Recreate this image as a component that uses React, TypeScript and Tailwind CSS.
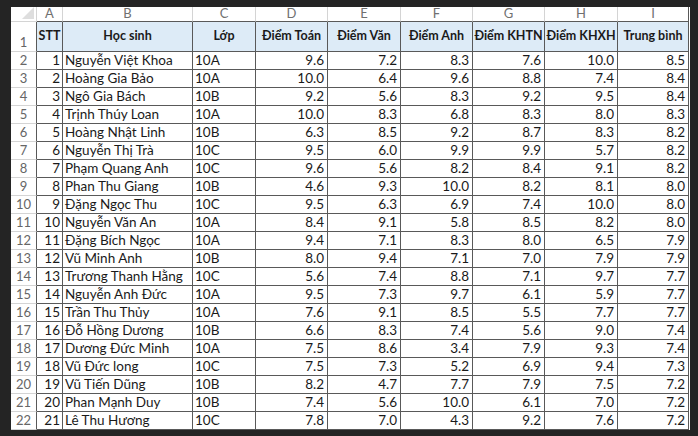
const columns = ["A", "B", "C", "D", "E", "F", "G", "H", "I"];

const headers = [
  "STT",
  "Học sinh",
  "Lớp",
  "Điểm Toán",
  "Điểm Văn",
  "Điểm Anh",
  "Điểm KHTN",
  "Điểm KHXH",
  "Trung bình",
];

type Student = [string, string, number, number, number, number, number, number];

const students: Student[] = [
  ["Nguyễn Việt Khoa", "10A", 9.6, 7.2, 8.3, 7.6, 10.0, 8.5],
  ["Hoàng Gia Bảo", "10A", 10.0, 6.4, 9.6, 8.8, 7.4, 8.4],
  ["Ngô Gia Bách", "10B", 9.2, 5.6, 8.3, 9.2, 9.5, 8.4],
  ["Trịnh Thúy Loan", "10A", 10.0, 8.3, 6.8, 8.3, 8.0, 8.3],
  ["Hoàng Nhật Linh", "10B", 6.3, 8.5, 9.2, 8.7, 8.3, 8.2],
  ["Nguyễn Thị Trà", "10C", 9.5, 6.0, 9.9, 9.9, 5.7, 8.2],
  ["Phạm Quang Anh", "10C", 9.6, 5.6, 8.2, 8.4, 9.1, 8.2],
  ["Phan Thu Giang", "10B", 4.6, 9.3, 10.0, 8.2, 8.1, 8.0],
  ["Đặng Ngọc Thu", "10C", 9.5, 6.3, 6.9, 7.4, 10.0, 8.0],
  ["Nguyễn Văn An", "10A", 8.4, 9.1, 5.8, 8.5, 8.2, 8.0],
  ["Đặng Bích Ngọc", "10A", 9.4, 7.1, 8.3, 8.0, 6.5, 7.9],
  ["Vũ Minh Anh", "10B", 8.0, 9.4, 7.1, 7.0, 7.9, 7.9],
  ["Trương Thanh Hằng", "10C", 5.6, 7.4, 8.8, 7.1, 9.7, 7.7],
  ["Nguyễn Anh Đức", "10A", 9.5, 7.3, 9.7, 6.1, 5.9, 7.7],
  ["Trần Thu Thủy", "10A", 7.6, 9.1, 8.5, 5.5, 7.7, 7.7],
  ["Đỗ Hồng Dương", "10B", 6.6, 8.3, 7.4, 5.6, 9.0, 7.4],
  ["Dương Đức Minh", "10A", 7.5, 8.6, 3.4, 7.9, 9.3, 7.4],
  ["Vũ Đức long", "10C", 7.5, 7.3, 5.2, 6.9, 9.4, 7.3],
  ["Vũ Tiến Dũng", "10B", 8.2, 4.7, 7.7, 7.9, 7.5, 7.2],
  ["Phan Mạnh Duy", "10B", 7.4, 5.6, 10.0, 6.1, 7.0, 7.2],
  ["Lê Thu Hương", "10C", 7.8, 7.0, 4.3, 9.2, 7.6, 7.2],
];

const grid =
  "grid grid-cols-[26px_26px_130px_63px_72px_73px_72px_72px_73px_71px]";

export default function App() {
  return (
    <div
      className="w-[698px] h-[436px] bg-[#242424] pl-[11px] pt-[7px] overflow-hidden"
      style={{ fontFamily: "Lato, 'Open Sans', sans-serif" }}
    >
      <div className="w-[679px] h-[423px] bg-white text-[13.5px] text-[#1a1a1a] leading-none">
        {/* Column letters */}
        <div className={`${grid} h-[15px]`}>
          <div className="relative border-r border-b border-[#d4d4d4]">
            <svg
              className="absolute right-[2px] bottom-[2px]"
              width="12"
              height="12"
              viewBox="0 0 12 12"
            >
              <polygon points="12,0 12,12 0,12" fill="#dedede" />
            </svg>
          </div>
          {columns.map((c, i) => (
            <div
              key={c}
              className={`flex items-end justify-center pb-[1px] text-[13px] text-[#707070] border-b border-[#595959] ${
                i === columns.length - 1 ? "border-r border-r-[#595959]" : "border-r border-r-[#d4d4d4]"
              }`}
            >
              {c}
            </div>
          ))}
        </div>

        {/* Header row */}
        <div className={`${grid} h-[30px]`}>
          <div className="flex items-end justify-center pb-[2px] text-[13px] text-[#666] border-r border-r-[#595959] border-b border-b-[#d4d4d4]">
            1
          </div>
          {headers.map((h) => (
            <div
              key={h}
              className="flex items-center justify-center text-[12.5px] font-bold bg-[#ddebf7] border-r border-b border-[#595959] whitespace-nowrap"
            >
              {h}
            </div>
          ))}
        </div>

        {/* Data rows */}
        {students.map((s, idx) => (
          <div key={idx} className={`${grid} h-[18px]`}>
            <div className="flex items-end justify-center pb-[2px] text-[13px] text-[#666] border-r border-r-[#595959] border-b border-b-[#d4d4d4]">
              {idx + 2}
            </div>
            <div className="flex items-end justify-end pr-[2px] pb-[2px] border-r border-b border-[#595959]">
              {idx + 1}
            </div>
            <div className="flex items-end pl-[2px] pb-[2px] border-r border-b border-[#595959] whitespace-nowrap">
              {s[0]}
            </div>
            <div className="flex items-end pl-[2px] pb-[2px] border-r border-b border-[#595959]">
              {s[1]}
            </div>
            {s.slice(2).map((v, j) => (
              <div
                key={j}
                className="flex items-end justify-end pr-[3px] pb-[2px] border-r border-b border-[#595959]"
              >
                {(v as number).toFixed(1)}
              </div>
            ))}
          </div>
        ))}
      </div>
    </div>
  );
}
